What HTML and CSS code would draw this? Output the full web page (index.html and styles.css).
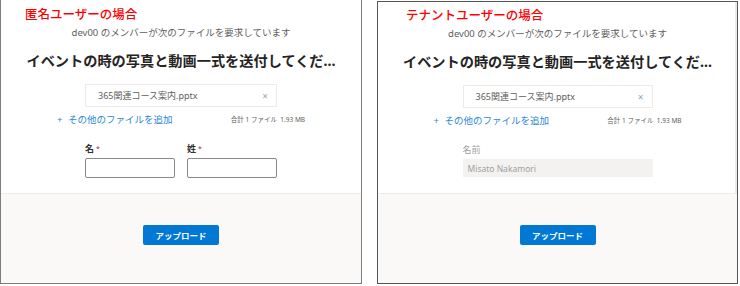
FILE: index.html
```html
<!DOCTYPE html>
<html lang="ja">
<head>
    <meta charset="UTF-8">
    <title>ファイル要求 - 匿名ユーザーとテナントユーザー</title>
    <link rel="stylesheet" href="styles.css">
</head>
<body>

    <div class="panels">
        <!-- 匿名ユーザー -->
        <div class="panel panel-anon">
            <div class="panel-body">
                <div class="caption">匿名ユーザーの場合</div>
                <div class="request">dev00 のメンバーが次のファイルを要求しています</div>
                <h1 class="request-title">イベントの時の写真と動画一式を送付してくだ...</h1>
                <div class="upload-area">
                    <div class="file-item">
                        <span class="file-name">365関連コース案内.pptx</span>
                        <span class="file-remove">×</span>
                    </div>
                    <div class="file-meta">
                        <span class="add-more"><span class="plus">+</span> その他のファイルを追加</span>
                        <span class="file-total">合計 1 ファイル&nbsp; 1.93 MB</span>
                    </div>
                    <div class="name-fields">
                        <div class="field">
                            <label class="field-label">名<span class="required">*</span></label>
                            <input class="field-input" type="text">
                        </div>
                        <div class="field">
                            <label class="field-label">姓<span class="required">*</span></label>
                            <input class="field-input" type="text">
                        </div>
                    </div>
                </div>
            </div>
            <div class="panel-footer">
                <button class="upload-btn">アップロード</button>
            </div>
        </div>

        <!-- テナントユーザー -->
        <div class="panel panel-tenant">
            <div class="panel-body">
                <div class="caption">テナントユーザーの場合</div>
                <div class="request">dev00 のメンバーが次のファイルを要求しています</div>
                <h1 class="request-title">イベントの時の写真と動画一式を送付してくだ...</h1>
                <div class="upload-area">
                    <div class="file-item">
                        <span class="file-name">365関連コース案内.pptx</span>
                        <span class="file-remove">×</span>
                    </div>
                    <div class="file-meta">
                        <span class="add-more"><span class="plus">+</span> その他のファイルを追加</span>
                        <span class="file-total">合計 1 ファイル&nbsp; 1.93 MB</span>
                    </div>
                    <div class="name-fields">
                        <div class="field field-wide">
                            <label class="field-label field-label-muted">名前</label>
                            <input class="field-input field-input-disabled" type="text" value="Misato Nakamori" disabled>
                        </div>
                    </div>
                </div>
            </div>
            <div class="panel-footer">
                <button class="upload-btn">アップロード</button>
            </div>
        </div>
    </div>

</body>
</html>
```

FILE: styles.css
```css
body {
    margin: 0;
    background-color: #fff;
    font-family: "Noto Sans", "Noto Sans CJK JP", sans-serif;
    color: #323130;
}
.panels {
    display: flex;
    gap: 15px;
    width: 738px;
    height: 284px;
}
.panel {
    display: flex;
    flex-direction: column;
    box-sizing: border-box;
    border: 1px solid #7d7d7d;
    background-color: #fff;
}
.panel-anon {
    width: 362px;
    border-top: none;
}
.panel-tenant {
    width: 361px;
    margin-top: 1px;
    border-color: #555;
    box-shadow: inset -2px -2px 0 #ecebea;
}
.panel-body {
    display: flex;
    flex-direction: column;
    align-items: center;
    height: 193px;
    border-bottom: 1px solid #edebe9;
    flex-shrink: 0;
}
.panel-tenant .panel-body {
    height: 191px;
}
.caption {
    align-self: flex-start;
    margin: 7px 0 0 24px;
    font-size: 12.5px;
    line-height: 16px;
    font-weight: 500;
    color: #ff0000;
}
.panel-tenant .caption {
    margin: 6px 0 0 28px;
}
.request {
    margin-top: 3px;
    font-size: 9.5px;
    line-height: 14px;
    color: #605e5c;
}
.request-title {
    margin: 11px 0 0;
    font-size: 14.2px;
    line-height: 20px;
    font-weight: bold;
    color: #252423;
    white-space: nowrap;
}
.upload-area {
    display: flex;
    flex-direction: column;
    align-items: center;
    width: 248px;
    margin-top: 13px;
}
.file-item {
    display: flex;
    align-items: center;
    justify-content: space-between;
    box-sizing: border-box;
    width: 192px;
    height: 23px;
    padding: 0 8px 0 12px;
    border: 1px solid #edebe9;
}
.panel-tenant .file-item {
    width: 190px;
}
.file-name {
    font-size: 9px;
    color: #605e5c;
}
.file-remove {
    font-size: 10px;
    color: #8fa6c4;
}
.file-meta {
    display: flex;
    justify-content: space-between;
    align-items: center;
    width: 100%;
    height: 12px;
    margin-top: 6px;
}
.add-more {
    font-size: 9.5px;
    color: #2b88d8;
}
.plus {
    margin-right: 3px;
}
.file-total {
    font-size: 6.5px;
    color: #605e5c;
}
.name-fields {
    display: flex;
    gap: 12px;
    margin-top: 18px;
}
.field {
    display: flex;
    flex-direction: column;
}
.field-label {
    font-size: 9px;
    line-height: 12px;
    font-weight: bold;
    color: #323130;
}
.required {
    margin-left: 2px;
    font-size: 7px;
    font-weight: normal;
    vertical-align: top;
    color: #a4262c;
}
.field-label-muted {
    font-weight: normal;
    color: #a19f9d;
}
.field-input {
    box-sizing: border-box;
    width: 90px;
    height: 20px;
    margin-top: 3px;
    border: 1px solid #8a8886;
    border-radius: 2px;
    background-color: #fff;
}
.field-wide .field-input {
    width: 190px;
    height: 18px;
}
.field-input-disabled {
    border: none;
    border-radius: 0;
    background-color: #f3f2f1;
    padding: 0 5px;
    font-family: "Noto Sans", sans-serif;
    font-size: 8.5px;
    color: #a19f9d;
}
.panel-footer {
    flex: 1;
    display: flex;
    justify-content: center;
    align-items: flex-start;
    padding-top: 31px;
    background-color: #faf9f8;
}
.upload-btn {
    width: 76px;
    height: 20px;
    padding: 0;
    border: none;
    border-radius: 2px;
    background-color: #0078d4;
    color: #fff;
    font-family: "Noto Sans CJK JP", sans-serif;
    font-size: 8.5px;
    font-weight: bold;
}
```
